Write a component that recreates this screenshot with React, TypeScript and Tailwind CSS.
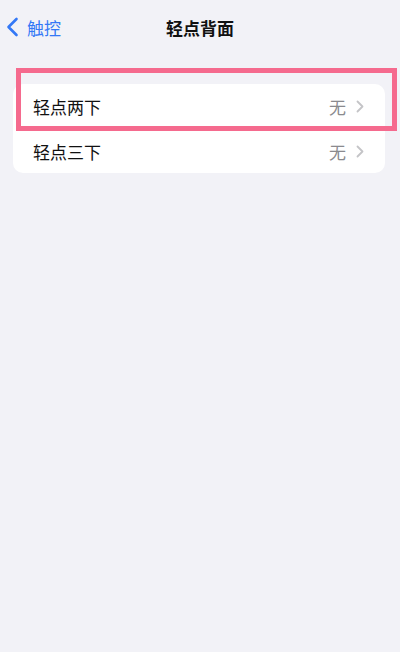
import React from "react";

const font = { fontFamily: '"Noto Sans CJK SC", "Noto Sans", sans-serif' };

function Chevron() {
  return (
    <svg width="8" height="13" viewBox="0 0 8 13" fill="none">
      <path d="M1.5 1.5 L6.5 6.5 L1.5 11.5" stroke="#c4c4c7" strokeWidth="1.8" strokeLinecap="round" strokeLinejoin="round" />
    </svg>
  );
}

function Row({ label }: { label: string }) {
  return (
    <div className="flex h-[44px] items-center justify-between pl-[20px] pr-[21px]">
      <span className="text-[17px] leading-none text-[#111]">{label}</span>
      <div className="flex items-center gap-[10px]">
        <span className="text-[17px] leading-none text-[#8a8a8e]">无</span>
        <Chevron />
      </div>
    </div>
  );
}

export default function App() {
  return (
    <div className="relative h-[652px] w-[400px] overflow-hidden bg-[#f2f2f7]" style={font}>
      <div className="relative flex h-[54px] items-center">
        <div className="flex items-center pl-[6px]">
          <svg width="13" height="20" viewBox="0 0 13 20" fill="none">
            <path d="M10.5 2 L2.5 10 L10.5 18" stroke="#3478f6" strokeWidth="2.6" strokeLinecap="round" strokeLinejoin="round" />
          </svg>
          <span className="ml-[8px] text-[17px] leading-none text-[#3478f6]">触控</span>
        </div>
        <div className="absolute inset-x-0 top-0 flex h-[54px] items-center justify-center">
          <span className="text-[17px] font-bold leading-none text-[#111]">轻点背面</span>
        </div>
      </div>
      <div className="ml-[13px] mr-[15px] mt-[30px] overflow-hidden rounded-[10px] bg-white">
        <Row label="轻点两下" />
        <div className="ml-[20px] h-px bg-[#e5e5ea]" />
        <Row label="轻点三下" />
      </div>
      <div className="absolute left-[16px] top-[68px] h-[63px] w-[381px] border-[5px] border-[#f56a8e]" />
    </div>
  );
}
